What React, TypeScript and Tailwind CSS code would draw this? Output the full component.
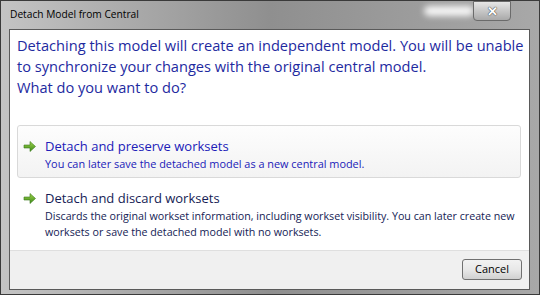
import type { ReactNode } from "react";

const FONT = { fontFamily: '"Open Sans", "Noto Sans", sans-serif' };

function GreenArrow() {
  return (
    <svg width="13" height="13" viewBox="0 0 13 13" aria-hidden>
      <defs>
        <linearGradient id="ga" x1="0" y1="0" x2="0" y2="1">
          <stop offset="0" stopColor="#9fd34a" />
          <stop offset="1" stopColor="#3d8a1a" />
        </linearGradient>
      </defs>
      <path d="M1 5h6V1.5L12.5 6.5 7 11.5V8H1z" fill="url(#ga)" stroke="#3b7a1c" strokeWidth="0.6" />
    </svg>
  );
}

function CommandLink({
  title,
  children,
  hot,
}: {
  title: string;
  children: ReactNode;
  hot?: boolean;
}) {
  return (
    <div
      className={`flex gap-[9px] whitespace-nowrap rounded-[3px] border pl-[5px] pr-2 pt-[10px] pb-[5px] ${
        hot
          ? "border-[#d9d9d9] bg-gradient-to-b from-[#fdfdfd] to-[#f3f3f3]"
          : "border-transparent"
      }`}
    >
      <div className="pt-[4px]">
        <GreenArrow />
      </div>
      <div>
        <p
          className={`text-[13px] leading-[20px] ${hot ? "text-[#2020b8]" : "text-[#151c55]"}`}
        >
          {title}
        </p>
        <div
          className={`leading-[16px] ${hot ? "text-[10.9px] text-[#2020b8]" : "text-[10.7px] text-[#151c55]"}`}
        >
          {children}
        </div>
      </div>
    </div>
  );
}

export default function App() {
  return (
    <div
      className="flex h-[295px] w-[540px] flex-col overflow-hidden border border-[#3a3a3a] bg-gradient-to-r from-[#c4c4c4] via-[#8f8f8f] to-[#a8a8a8]"
      style={FONT}
    >
      {/* title bar */}
      <div className="relative flex h-[28px] shrink-0 items-center pl-[9px]">
        <span className="text-[10.2px] text-black">Detach Model from Central</span>
        <div className="absolute right-[65px] top-[5px] h-[10px] w-[50px] rounded-full bg-white/90 blur-[3px]" />
        <div className="absolute right-[28px] top-0 flex h-[20px] w-[38px] items-center justify-center rounded-b-[4px] border border-[#6b6b6b] bg-gradient-to-b from-[#e6e6e6] to-[#a9a9a9]">
          <span className="text-[13px] font-bold leading-none text-white [text-shadow:0_0_1px_#333,0_0_1px_#333]">
            ✕
          </span>
        </div>
      </div>

      {/* client area */}
      <div className="ml-[8px] mr-[9px] flex h-[261px] shrink-0 flex-col border border-[#5a5a5a] bg-white">
        <div className="flex-1 overflow-hidden pl-[7px] pr-[8px] pt-[5px]">
          <p className="whitespace-nowrap text-[14.6px] leading-[21px] text-[#1e2a9f]">
            Detaching this model will create an independent model. You will be unable
            <br />
            to synchronize your changes with the original central model.
            <br />
            What do you want to do?
          </p>

          <div className="mt-[27px]">
            <CommandLink title="Detach and preserve worksets" hot>
              You can later save the detached model as a new central model.
            </CommandLink>
          </div>
          <div className="-mt-[1px]">
            <CommandLink title="Detach and discard worksets">
              Discards the original workset information, including workset visibility. You can later create new
              <br />
              worksets or save the detached model with no worksets.
            </CommandLink>
          </div>
        </div>

        {/* footer */}
        <div className="flex h-[39px] shrink-0 items-start justify-end border-t border-[#dfdfdf] bg-[#f0f0f0] pr-[7px] pt-[8px]">
          <button className="h-[21px] w-[60px] rounded-[3px] border border-[#707070] bg-gradient-to-b from-[#f2f2f2] via-[#e8e8e8] to-[#d0d0d0] text-[11px] text-black">
            Cancel
          </button>
        </div>
      </div>
    </div>
  );
}
